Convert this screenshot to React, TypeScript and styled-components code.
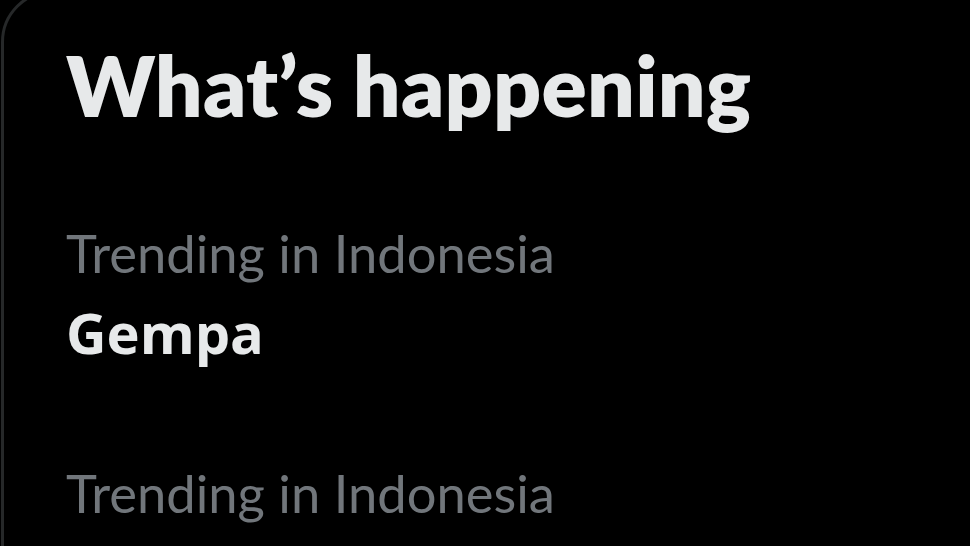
import styled, { createGlobalStyle } from "styled-components";

const GlobalStyle = createGlobalStyle`
  html, body {
    margin: 0;
    padding: 0;
    background: #000;
    overflow: hidden;
  }
  body {
    font-family: Lato, "Noto Sans", sans-serif;
  }
`;

const trends = [
  { context: "Trending in Indonesia", name: "Gempa" },
  { context: "Trending in Indonesia", name: "Banjir" },
];

export default function App() {
  return (
    <>
      <GlobalStyle />
      <Page>
        <Card>
          <Heading>What’s happening</Heading>
          {trends.map((t, i) => (
            <TrendRow key={i}>
              <TrendContext>{t.context}</TrendContext>
              <TrendName>{t.name}</TrendName>
            </TrendRow>
          ))}
        </Card>
      </Page>
    </>
  );
}

const Page = styled.div`
  width: 970px;
  height: 546px;
  overflow: hidden;
  padding-left: 1px;
  box-sizing: border-box;
`;

const Card = styled.section`
  width: 1200px;
  margin-top: -10px;
  border: 3px solid #262829;
  border-radius: 52px;
  padding-top: 42px;
  box-sizing: border-box;
`;

const Heading = styled.h2`
  margin: 0;
  padding: 0 0 41px 62px;
  font-size: 84px;
  line-height: 100px;
  font-weight: 800;
  color: #e7e9ea;
  letter-spacing: 0.2px;
`;

const TrendRow = styled.div`
  display: flex;
  flex-direction: column;
  gap: 11px;
  padding: 45px 0 48px 62px;
`;

const TrendContext = styled.span`
  font-size: 52.5px;
  line-height: 64px;
  font-weight: 400;
  color: #71767b;
`;

const TrendName = styled.span`
  font-family: "Open Sans", Lato, sans-serif;
  font-size: 56px;
  line-height: 72px;
  font-weight: 700;
  color: #e7e9ea;
`;
